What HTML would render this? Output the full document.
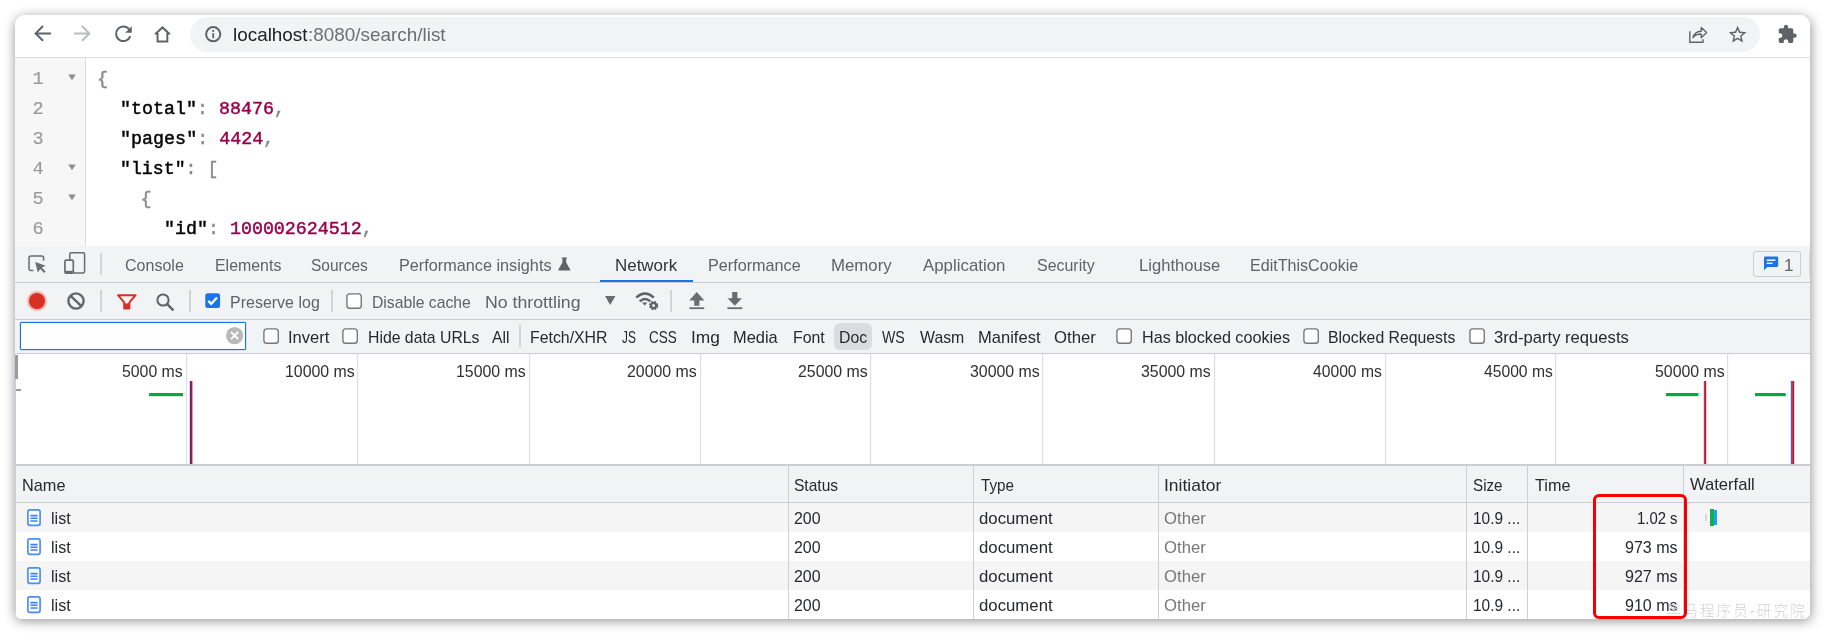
<!DOCTYPE html>
<html lang="en"><head><meta charset="utf-8"><title>Network panel</title>
<style>
html,body{margin:0;padding:0;background:#fff;}
body{width:1825px;height:636px;overflow:hidden;position:relative;}
#root{position:absolute;left:0;top:0;width:1825px;height:636px;overflow:hidden;}
#root{will-change:transform;}
.t{position:absolute;white-space:pre;line-height:40px;height:40px;transform-origin:0 0;}
.a{position:absolute;}
#card{position:absolute;left:15px;top:15px;width:1795px;height:604px;border-radius:10px 10px 7px 7px;background:#fff;
  box-shadow:0.4px 2px 12px rgba(0,0,0,0.42);overflow:hidden;}
#card .a{position:absolute;}
svg{position:absolute;overflow:visible;}
#clip{position:absolute;left:15px;top:15px;width:1795px;height:604px;border-radius:10px 10px 7px 7px;overflow:hidden;}
#in{position:absolute;left:-15px;top:-15px;width:1825px;height:636px;}

</style></head>
<body>
<div id="root">
<div id="card"></div>
<div id="clip"><div id="in">
<div class="a" style="left:15px;top:15px;width:1795px;height:42px;background:#fff;"></div>
<div class="a" style="left:190px;top:17px;width:1570px;height:35px;background:#f1f3f4;border-radius:17.5px;"></div>
<div class="a" style="left:15px;top:57px;width:1795px;height:1px;background:#dadce0;"></div>
<div class="a" style="left:15px;top:58px;width:70px;height:188px;background:#f7f7f7;"></div>
<div class="a" style="left:85px;top:58px;width:1px;height:188px;background:#dddddd;"></div>
<div class="a" style="left:15px;top:246px;width:1795px;height:373px;background:#f1f3f4;"></div>
<div class="a" style="left:15px;top:282px;width:1795px;height:1px;background:#cbcdd1;"></div>
<div class="a" style="left:15px;top:319px;width:1795px;height:1px;background:#cbcdd1;"></div>
<div class="a" style="left:15px;top:353px;width:1795px;height:1px;background:#cbcdd1;"></div>
<div class="a" style="left:599.5px;top:280.4px;width:93px;height:2px;background:#1a73e8;"></div>
<svg style="left:98.9px;top:253.2px;" width="4" height="21.600000000000023" viewBox="0 0 4 21.600000000000023"><rect x="1.2" y="0" width="1.6" height="21.600000000000023" fill="#c9cbd0"/></svg>
<svg style="left:98.9px;top:289.5px;" width="4" height="22.0" viewBox="0 0 4 22.0"><rect x="1.2" y="0" width="1.6" height="22.0" fill="#c9cbd0"/></svg>
<svg style="left:188.4px;top:289.5px;" width="4" height="22.0" viewBox="0 0 4 22.0"><rect x="1.2" y="0" width="1.6" height="22.0" fill="#c9cbd0"/></svg>
<svg style="left:329.8px;top:289.5px;" width="4" height="22.0" viewBox="0 0 4 22.0"><rect x="1.2" y="0" width="1.6" height="22.0" fill="#c9cbd0"/></svg>
<svg style="left:669px;top:289.5px;" width="4" height="22.0" viewBox="0 0 4 22.0"><rect x="1.2" y="0" width="1.6" height="22.0" fill="#c9cbd0"/></svg>
<svg style="left:518px;top:325px;" width="4" height="22" viewBox="0 0 4 22"><rect x="1.2" y="0" width="1.6" height="22" fill="#c9cbd0"/></svg>
<div class="a" style="left:19.6px;top:322.4px;width:226.8px;height:27.8px;background:#fff;box-sizing:border-box;border:1.3px solid #1a73e8;border-radius:1px;box-shadow:0 0 0 0.5px rgba(26,115,232,0.30);"></div>
<div class="a" style="left:834.4px;top:323.2px;width:37.4px;height:27.2px;background:#dadce0;border-radius:6px;"></div>
<div class="a" style="left:15px;top:354px;width:1795px;height:111px;background:#fff;"></div>
<svg style="left:184.0px;top:354px;" width="5" height="110" viewBox="0 0 5 110"><rect x="1.95" y="0" width="1.25" height="110" fill="#dfdfdf"/></svg>
<svg style="left:355.25px;top:354px;" width="5" height="110" viewBox="0 0 5 110"><rect x="1.95" y="0" width="1.25" height="110" fill="#dfdfdf"/></svg>
<svg style="left:526.5px;top:354px;" width="5" height="110" viewBox="0 0 5 110"><rect x="1.95" y="0" width="1.25" height="110" fill="#dfdfdf"/></svg>
<svg style="left:697.75px;top:354px;" width="5" height="110" viewBox="0 0 5 110"><rect x="1.95" y="0" width="1.25" height="110" fill="#dfdfdf"/></svg>
<svg style="left:868.2px;top:354px;" width="5" height="110" viewBox="0 0 5 110"><rect x="1.95" y="0" width="1.25" height="110" fill="#dfdfdf"/></svg>
<svg style="left:1040.25px;top:354px;" width="5" height="110" viewBox="0 0 5 110"><rect x="1.95" y="0" width="1.25" height="110" fill="#dfdfdf"/></svg>
<svg style="left:1211.5px;top:354px;" width="5" height="110" viewBox="0 0 5 110"><rect x="1.95" y="0" width="1.25" height="110" fill="#dfdfdf"/></svg>
<svg style="left:1382.75px;top:354px;" width="5" height="110" viewBox="0 0 5 110"><rect x="1.95" y="0" width="1.25" height="110" fill="#dfdfdf"/></svg>
<svg style="left:1553.0px;top:354px;" width="5" height="110" viewBox="0 0 5 110"><rect x="1.95" y="0" width="1.25" height="110" fill="#dfdfdf"/></svg>
<svg style="left:1725.0px;top:354px;" width="5" height="110" viewBox="0 0 5 110"><rect x="1.95" y="0" width="1.25" height="110" fill="#dfdfdf"/></svg>
<div class="a" style="left:15px;top:464px;width:1795px;height:2px;background:#cbcdd1;"></div>
<div class="a" style="left:15.4px;top:354.5px;width:2.8px;height:24px;background:#9a9a9a;"></div>
<div class="a" style="left:15.3px;top:378.5px;width:1px;height:86px;background:#c4cfe2;"></div>
<div class="a" style="left:16px;top:388.8px;width:5.4px;height:2px;background:#9a9a9a;"></div>
<svg style="left:149.2px;top:392.6px;" width="34.1" height="3.2" viewBox="0 0 34.1 3.2"><rect x="0" y="0" width="34.1" height="3.2" fill="#05a847"/></svg>
<div class="a" style="left:184px;top:392px;width:1px;height:4px;background:#d8ecf8;"></div>
<svg style="left:1666.1px;top:392.6px;" width="32.5" height="3.2" viewBox="0 0 32.5 3.2"><rect x="0" y="0" width="32.5" height="3.2" fill="#05a847"/></svg>
<div class="a" style="left:1699px;top:392px;width:1px;height:4px;background:#d8ecf8;"></div>
<svg style="left:1755.2px;top:392.6px;" width="30.8" height="3.2" viewBox="0 0 30.8 3.2"><rect x="0" y="0" width="30.8" height="3.2" fill="#05a847"/></svg>
<div class="a" style="left:1787px;top:392px;width:1px;height:4px;background:#d8ecf8;"></div>
<div class="a" style="left:189px;top:381px;width:1px;height:83px;background:#dcdcf6;"></div>
<div class="a" style="left:190px;top:381px;width:1px;height:83px;background:#2a2ab8;"></div>
<div class="a" style="left:191px;top:381px;width:1px;height:83px;background:#c81414;"></div>
<div class="a" style="left:192px;top:381px;width:1px;height:83px;background:#ee9c9c;"></div>
<div class="a" style="left:1703px;top:381px;width:1px;height:83px;background:#f6dce2;"></div>
<div class="a" style="left:1704px;top:381px;width:1px;height:83px;background:#b23a60;"></div>
<div class="a" style="left:1705px;top:381px;width:1px;height:83px;background:#cc1418;"></div>
<div class="a" style="left:1706px;top:381px;width:1px;height:83px;background:#f8d0d0;"></div>
<div class="a" style="left:1790px;top:381px;width:1px;height:83px;background:#dcdcf6;"></div>
<div class="a" style="left:1791px;top:381px;width:1px;height:83px;background:#5c5cc0;"></div>
<div class="a" style="left:1792px;top:381px;width:1px;height:83px;background:#a84464;"></div>
<div class="a" style="left:1793px;top:381px;width:1px;height:83px;background:#c81010;"></div>
<div class="a" style="left:1794px;top:381px;width:1px;height:83px;background:#f8d0d0;"></div>
<div class="a" style="left:15px;top:466.5px;width:1795px;height:36px;background:#f1f3f4;"></div>
<div class="a" style="left:15px;top:502.3px;width:1795px;height:1px;background:#cbcdd1;"></div>
<div class="a" style="left:15px;top:503.3px;width:1795px;height:29px;background:#f5f5f5;"></div>
<div class="a" style="left:15px;top:532.3px;width:1795px;height:29px;background:#fff;"></div>
<div class="a" style="left:15px;top:561.3px;width:1795px;height:29px;background:#f5f5f5;"></div>
<div class="a" style="left:15px;top:590.3px;width:1795px;height:29px;background:#fff;"></div>
<div class="a" style="left:788.2px;top:466px;width:1px;height:153.5px;background:#cdcfd3;"></div>
<div class="a" style="left:973.3px;top:466px;width:1px;height:153.5px;background:#cdcfd3;"></div>
<div class="a" style="left:1158px;top:466px;width:1px;height:153.5px;background:#cdcfd3;"></div>
<div class="a" style="left:1466.2px;top:466px;width:1px;height:153.5px;background:#cdcfd3;"></div>
<div class="a" style="left:1527.2px;top:466px;width:1px;height:153.5px;background:#cdcfd3;"></div>
<div class="a" style="left:1683.3px;top:466px;width:1px;height:153.5px;background:#cdcfd3;"></div>
<div class="a" style="left:1704.8px;top:514px;width:2.4px;height:7px;background:#d9dadc;"></div>
<div class="a" style="left:1710px;top:508.7px;width:4.2px;height:17.7px;background:#0fae4e;"></div>
<div class="a" style="left:1714.2px;top:510px;width:2.8px;height:15px;background:#1e9eff;"></div>
<svg style="left:204.9px;top:293.0px" width="15.4" height="15.4" viewBox="0 0 16 16"><rect x="0.3" y="0.3" width="15.4" height="15.4" rx="2.6" fill="#1a73e8"/><path d="M3.4 8.2l3.1 3.1 6-6.6" fill="none" stroke="#fff" stroke-width="2.4"/></svg>
<svg style="left:346.20000000000005px;top:292.7px" width="16.2" height="16.2" viewBox="0 0 16 16"><rect x="0.9" y="0.9" width="14.2" height="14.2" rx="2.8" fill="#fff" stroke="#767676" stroke-width="1.35"/></svg>
<svg style="left:262.6px;top:328.3px" width="16.2" height="16.2" viewBox="0 0 16 16"><rect x="0.9" y="0.9" width="14.2" height="14.2" rx="2.8" fill="#fff" stroke="#767676" stroke-width="1.35"/></svg>
<svg style="left:342.40000000000003px;top:328.3px" width="16.2" height="16.2" viewBox="0 0 16 16"><rect x="0.9" y="0.9" width="14.2" height="14.2" rx="2.8" fill="#fff" stroke="#767676" stroke-width="1.35"/></svg>
<svg style="left:1116.1px;top:328.3px" width="16.2" height="16.2" viewBox="0 0 16 16"><rect x="0.9" y="0.9" width="14.2" height="14.2" rx="2.8" fill="#fff" stroke="#767676" stroke-width="1.35"/></svg>
<svg style="left:1303.1px;top:328.3px" width="16.2" height="16.2" viewBox="0 0 16 16"><rect x="0.9" y="0.9" width="14.2" height="14.2" rx="2.8" fill="#fff" stroke="#767676" stroke-width="1.35"/></svg>
<svg style="left:1468.6px;top:328.3px" width="16.2" height="16.2" viewBox="0 0 16 16"><rect x="0.9" y="0.9" width="14.2" height="14.2" rx="2.8" fill="#fff" stroke="#767676" stroke-width="1.35"/></svg>
<svg style="left:33.9px;top:25.4px;" width="17" height="16.8" viewBox="0 0 16.2 16"><path d="M8.6 1 L1.6 8 L8.6 15" fill="none" stroke="#5f6368" stroke-width="1.9" /><path d="M1.8 8 H16.2" fill="none" stroke="#5f6368" stroke-width="1.9" /></svg>
<svg style="left:74.4px;top:25.4px;" width="17" height="16.8" viewBox="0 0 16.2 16"><path d="M7.6 1 L14.6 8 L7.6 15" fill="none" stroke="#b9bcc0" stroke-width="1.9" /><path d="M14.4 8 H0" fill="none" stroke="#b9bcc0" stroke-width="1.9" /></svg>
<svg style="left:113.6px;top:25.3px;" width="18.4" height="17" viewBox="0 0 17.6 16.2"><path d="M14.6 4.2 A7 7 0 1 0 15.6 10.6" fill="none" stroke="#5f6368" stroke-width="1.9"/><path d="M17 1.2 V7.4 H10.8 Z" fill="#5f6368"/></svg>
<svg style="left:154.2px;top:25.8px;" width="16.9" height="16.6" viewBox="0 0 16.2 16"><path d="M1 8 L8.1 1.4 L15.2 8 M3.4 6.8 V15 H12.8 V6.8" fill="none" stroke="#5f6368" stroke-width="1.9" stroke-linejoin="miter"/></svg>
<svg style="left:204.5px;top:26.2px;" width="16.4" height="16.4" viewBox="0 0 16.4 16.4"><circle cx="8.2" cy="8.2" r="7.1" fill="none" stroke="#5f6368" stroke-width="2"/><rect x="7.3" y="7.2" width="1.8" height="5" fill="#5f6368"/><rect x="7.3" y="4" width="1.8" height="1.9" fill="#5f6368"/></svg>
<svg style="left:1688.7px;top:26.2px;" width="18.6" height="17" viewBox="0 0 18.6 17"><path d="M0.8 5.2 V16.2 H14 V13.2" fill="none" stroke="#5f6368" stroke-width="1.4"/><path d="M4 11.6 C5 7.6 8 5.4 12.2 5.2 V1.4 L17.6 6.6 L12.2 11.8 V8 C8.6 8 6 9 4 11.6 Z" fill="none" stroke="#5f6368" stroke-width="1.4" stroke-linejoin="round"/></svg>
<svg style="left:1726.8px;top:24.1px;" width="21.2" height="21.2" viewBox="0 0 24 24"><path d="M22 9.24l-7.19-.62L12 2 9.19 8.63 2 9.24l5.46 4.73L5.82 21 12 17.27 18.18 21l-1.63-7.03L22 9.24zM12 15.4l-3.76 2.27 1-4.28-3.32-2.88 4.38-.38L12 6.1l1.71 4.04 4.38.38-3.32 2.88 1 4.28L12 15.4z" fill="#5f6368"/></svg>
<svg style="left:1777.2px;top:23.9px;" width="20.6" height="20.6" viewBox="0 0 24 24"><path d="M20.5 11H19V7c0-1.1-.9-2-2-2h-4V3.5C13 2.12 11.88 1 10.5 1S8 2.12 8 3.5V5H4c-1.1 0-1.99.9-1.99 2v3.8H3.5c1.49 0 2.7 1.21 2.7 2.7s-1.21 2.7-2.7 2.7H2V20c0 1.1.9 2 2 2h3.8v-1.5c0-1.49 1.21-2.7 2.7-2.7 1.49 0 2.7 1.21 2.7 2.7V22H17c1.1 0 2-.9 2-2v-4h1.5c1.38 0 2.5-1.12 2.5-2.5S21.88 11 20.5 11z" fill="#5f6368"/></svg>
<svg style="left:68px;top:74.2px;" width="8" height="6.6" viewBox="0 0 8 6.6"><path d="M0.3 0.5 H7.7 L4 6.3 Z" fill="#8c8c8c"/></svg>
<svg style="left:68px;top:164.2px;" width="8" height="6.6" viewBox="0 0 8 6.6"><path d="M0.3 0.5 H7.7 L4 6.3 Z" fill="#8c8c8c"/></svg>
<svg style="left:68px;top:194.2px;" width="8" height="6.6" viewBox="0 0 8 6.6"><path d="M0.3 0.5 H7.7 L4 6.3 Z" fill="#8c8c8c"/></svg>
<svg style="left:28.3px;top:255px;" width="18.4" height="18.4" viewBox="0 0 18.4 18.4"><path d="M5.4 15.6 H3 Q1 15.6 1 13.6 V3 Q1 1 3 1 H13.6 Q15.6 1 15.6 3 V5.8" fill="none" stroke="#6a6c70" stroke-width="1.5"/><path d="M7.2 7 L17.8 10.8 L13.8 12.4 L17.6 16.6 L16.2 18 L12.2 14 L9.8 17.6 Z" fill="#6a6c70"/></svg>
<svg style="left:63.8px;top:252.2px;" width="21.6" height="22" viewBox="0 0 21.6 22"><path d="M5.8 8 V2.2 Q5.8 0.8 7.2 0.8 H19.2 Q20.6 0.8 20.6 2.2 V19.6 Q20.6 21 19.2 21 H9.6" fill="none" stroke="#6a6c70" stroke-width="1.5"/><rect x="0.9" y="8.2" width="8.4" height="12.9" rx="1.2" fill="#f1f3f4" stroke="#6a6c70" stroke-width="1.7"/><rect x="1.2" y="18.8" width="7.8" height="2.2" fill="#6a6c70"/></svg>
<svg style="left:558.3px;top:257px;" width="12.6" height="14" viewBox="0 0 12.6 14"><path d="M3.6 0.4 H9 V1.6 H8.2 V5.4 L12.2 12.4 Q12.6 13.6 11.4 13.6 H1.2 Q0 13.6 0.4 12.4 L4.4 5.4 V1.6 H3.6 Z" fill="#5f6368"/></svg>
<svg style="left:27px;top:290.5px;" width="20" height="20" viewBox="0 0 20 20"><circle cx="10" cy="10" r="10.4" fill="#f2a9a4" opacity="0.5"/><circle cx="10" cy="10" r="9.2" fill="#f09a94" opacity="0.55"/><circle cx="10" cy="10" r="8" fill="#d93025"/></svg>
<svg style="left:67px;top:291.5px;" width="18" height="18" viewBox="0 0 18 18"><circle cx="9" cy="9" r="7.6" fill="none" stroke="#63666a" stroke-width="2.4"/><path d="M3.6 3.8 L14.4 14.2" stroke="#63666a" stroke-width="2.4" fill="none"/></svg>
<svg style="left:116.5px;top:293.6px;" width="19.6" height="15.8" viewBox="0 0 19.6 15.8"><path d="M1 1.2 H18.6 L12.4 8.4 V14.6 H7.2 V8.4 Z" fill="none" stroke="#d93025" stroke-width="2" stroke-linejoin="round"/><path d="M7.4 9.4 H12.2 V14.4 H7.4 Z" fill="#d93025"/></svg>
<svg style="left:155.6px;top:292.6px;" width="18.6" height="18.6" viewBox="0 0 18.6 18.6"><circle cx="7" cy="7" r="5.6" fill="none" stroke="#5f6368" stroke-width="2"/><path d="M11.2 11.2 L17.4 17.4" stroke="#5f6368" stroke-width="2.4" fill="none"/></svg>
<svg style="left:605.1px;top:296.4px;" width="10.4" height="9" viewBox="0 0 10.4 9"><path d="M0 0 H10.4 L5.2 9 Z" fill="#6a6c70"/></svg>
<svg style="left:635.2px;top:291.6px;" width="23.6" height="18.6" viewBox="0 0 23.6 18.6"><path d="M1.2 5.6 Q10 -2.4 18.8 5.6" fill="none" stroke="#5f6368" stroke-width="2.4"/><path d="M4.6 9.4 Q10 4.6 15.4 9.4" fill="none" stroke="#5f6368" stroke-width="2.4"/><path d="M7 10.6 H12.4 L9.7 13.6 Z" fill="#5f6368"/><circle cx="18.6" cy="13.6" r="3.6" fill="none" stroke="#5f6368" stroke-width="2" stroke-dasharray="1.9 0.93"/><circle cx="18.6" cy="13.6" r="2.5" fill="none" stroke="#5f6368" stroke-width="2"/></svg>
<svg style="left:688.6px;top:292px;" width="15.6" height="17.4" viewBox="0 0 15.6 17.4"><path d="M7.8 0 L15.4 8.4 H10.4 V13.8 H5.2 V8.4 H0.2 Z" fill="#6a6c70"/><rect x="0.4" y="15.3" width="14.8" height="1.8" fill="#6a6c70"/></svg>
<svg style="left:727.2px;top:292px;" width="15.6" height="17.4" viewBox="0 0 15.6 17.4"><path d="M5.2 0 H10.4 V6.2 H15 L7.8 13.8 L0.6 6.2 H5.2 Z" fill="#6a6c70"/><rect x="0.4" y="15.3" width="14.8" height="1.8" fill="#6a6c70"/></svg>
<svg style="left:226.4px;top:326.6px;" width="17.2" height="17.2" viewBox="0 0 17.2 17.2"><circle cx="8.6" cy="8.6" r="8.6" fill="#b9b9b9"/><path d="M5 5 L12.2 12.2 M12.2 5 L5 12.2" stroke="#fff" stroke-width="1.8" fill="none"/></svg>
<div class="a" style="left:1753.2px;top:251.2px;width:47.8px;height:25.6px;background:#f1f3f4;box-sizing:border-box;border:1px solid #cbcdd1;border-radius:3px;"></div>
<svg style="left:1764px;top:256.4px;" width="14.2" height="14.8" viewBox="0 0 15.6 15"><path d="M1.6 0 H14 Q15.6 0 15.6 1.6 V9.8 Q15.6 11.4 14 11.4 H3.6 L0 15 V1.6 Q0 0 1.6 0 Z" fill="#1a73e8"/><rect x="3" y="3.2" width="9.6" height="1.6" fill="#fff"/><rect x="3" y="6.6" width="6.4" height="1.6" fill="#fff"/></svg>
<div class="a" style="left:1808.8px;top:253.4px;width:1.2px;height:21.2px;background:#d8dadd;"></div>
<svg style="left:26.8px;top:509px;" width="14.4" height="17.2" viewBox="0 0 14.4 17.2"><rect x="0.9" y="0.9" width="12.2" height="15.4" rx="2" fill="#fff" stroke="#4b8df8" stroke-width="1.7"/><path d="M3.4 6.6 H10.6 M3.4 9.3 H10.6 M3.4 12 H10.6" stroke="#3b82f6" stroke-width="1.6" fill="none"/></svg>
<svg style="left:26.8px;top:538px;" width="14.4" height="17.2" viewBox="0 0 14.4 17.2"><rect x="0.9" y="0.9" width="12.2" height="15.4" rx="2" fill="#fff" stroke="#4b8df8" stroke-width="1.7"/><path d="M3.4 6.6 H10.6 M3.4 9.3 H10.6 M3.4 12 H10.6" stroke="#3b82f6" stroke-width="1.6" fill="none"/></svg>
<svg style="left:26.8px;top:567px;" width="14.4" height="17.2" viewBox="0 0 14.4 17.2"><rect x="0.9" y="0.9" width="12.2" height="15.4" rx="2" fill="#fff" stroke="#4b8df8" stroke-width="1.7"/><path d="M3.4 6.6 H10.6 M3.4 9.3 H10.6 M3.4 12 H10.6" stroke="#3b82f6" stroke-width="1.6" fill="none"/></svg>
<svg style="left:26.8px;top:596px;" width="14.4" height="17.2" viewBox="0 0 14.4 17.2"><rect x="0.9" y="0.9" width="12.2" height="15.4" rx="2" fill="#fff" stroke="#4b8df8" stroke-width="1.7"/><path d="M3.4 6.6 H10.6 M3.4 9.3 H10.6 M3.4 12 H10.6" stroke="#3b82f6" stroke-width="1.6" fill="none"/></svg>
<div class="a" style="left:15px;top:464px;width:1px;height:155px;background:#cfcfcf;"></div>
</div></div>

<span class="t" style="left:233.47px;top:15.00px;font-size:18.4px;font-family:'Liberation Sans',sans-serif;transform:scaleX(1.0268);color:#202124;font-weight:400;">localhost</span>
<span class="t" style="left:307.75px;top:15.00px;font-size:18.4px;font-family:'Liberation Sans',sans-serif;transform:scaleX(1.0273);color:#6b6f74;font-weight:400;">:8080/search/list</span>
<span class="t" style="left:32.60px;top:60.00px;font-size:18.6px;font-family:'Liberation Mono',monospace;transform:scaleX(1.0000);color:#999;font-weight:400;-webkit-text-stroke-width:0.15px;">1</span>
<span class="t" style="left:32.60px;top:90.00px;font-size:18.6px;font-family:'Liberation Mono',monospace;transform:scaleX(1.0000);color:#999;font-weight:400;-webkit-text-stroke-width:0.15px;">2</span>
<span class="t" style="left:32.60px;top:120.00px;font-size:18.6px;font-family:'Liberation Mono',monospace;transform:scaleX(1.0000);color:#999;font-weight:400;-webkit-text-stroke-width:0.15px;">3</span>
<span class="t" style="left:32.60px;top:150.00px;font-size:18.6px;font-family:'Liberation Mono',monospace;transform:scaleX(1.0000);color:#999;font-weight:400;-webkit-text-stroke-width:0.15px;">4</span>
<span class="t" style="left:32.60px;top:180.00px;font-size:18.6px;font-family:'Liberation Mono',monospace;transform:scaleX(1.0000);color:#999;font-weight:400;-webkit-text-stroke-width:0.15px;">5</span>
<span class="t" style="left:32.60px;top:210.00px;font-size:18.6px;font-family:'Liberation Mono',monospace;transform:scaleX(1.0000);color:#999;font-weight:400;-webkit-text-stroke-width:0.15px;">6</span>
<span class="t" style="left:97.00px;top:59.90px;font-size:18.6px;font-family:'Liberation Mono',monospace;transform:scaleX(1.0000);color:#8a8a8a;font-weight:400;-webkit-text-stroke-width:0.45px;">{</span>
<span class="t" style="left:120.03px;top:89.90px;font-size:18.6px;font-family:'Liberation Mono',monospace;transform:scaleX(0.9850);color:#000;font-weight:400;-webkit-text-stroke-width:0.45px;"><span style="color:#000">&quot;total&quot;</span><span style="color:#8a8a8a">: </span><span style="color:#99004d">88476</span><span style="color:#8a8a8a">,</span></span>
<span class="t" style="left:120.02px;top:119.90px;font-size:18.6px;font-family:'Liberation Mono',monospace;transform:scaleX(0.9879);color:#000;font-weight:400;-webkit-text-stroke-width:0.45px;"><span style="color:#000">&quot;pages&quot;</span><span style="color:#8a8a8a">: </span><span style="color:#99004d">4424</span><span style="color:#8a8a8a">,</span></span>
<span class="t" style="left:120.04px;top:149.90px;font-size:18.6px;font-family:'Liberation Mono',monospace;transform:scaleX(0.9792);color:#000;font-weight:400;-webkit-text-stroke-width:0.45px;"><span style="color:#000">&quot;list&quot;</span><span style="color:#8a8a8a">: [</span></span>
<span class="t" style="left:140.60px;top:179.90px;font-size:18.6px;font-family:'Liberation Mono',monospace;transform:scaleX(1.0000);color:#8a8a8a;font-weight:400;-webkit-text-stroke-width:0.45px;">{</span>
<span class="t" style="left:164.03px;top:209.90px;font-size:18.6px;font-family:'Liberation Mono',monospace;transform:scaleX(0.9844);color:#000;font-weight:400;-webkit-text-stroke-width:0.45px;"><span style="color:#000">&quot;id&quot;</span><span style="color:#8a8a8a">: </span><span style="color:#99004d">100002624512</span><span style="color:#8a8a8a">,</span></span>
<span class="t" style="left:124.96px;top:246.20px;font-size:17px;font-family:'Liberation Sans',sans-serif;transform:scaleX(0.9426);color:#5f6368;font-weight:400;">Console</span>
<span class="t" style="left:214.66px;top:246.20px;font-size:17px;font-family:'Liberation Sans',sans-serif;transform:scaleX(0.9362);color:#5f6368;font-weight:400;">Elements</span>
<span class="t" style="left:310.69px;top:246.20px;font-size:17px;font-family:'Liberation Sans',sans-serif;transform:scaleX(0.9115);color:#5f6368;font-weight:400;">Sources</span>
<span class="t" style="left:399.04px;top:246.20px;font-size:17px;font-family:'Liberation Sans',sans-serif;transform:scaleX(0.9551);color:#5f6368;font-weight:400;">Performance insights</span>
<span class="t" style="left:708.15px;top:246.20px;font-size:17px;font-family:'Liberation Sans',sans-serif;transform:scaleX(0.9526);color:#5f6368;font-weight:400;">Performance</span>
<span class="t" style="left:830.61px;top:246.20px;font-size:17px;font-family:'Liberation Sans',sans-serif;transform:scaleX(0.9883);color:#5f6368;font-weight:400;">Memory</span>
<span class="t" style="left:923.40px;top:246.20px;font-size:17px;font-family:'Liberation Sans',sans-serif;transform:scaleX(0.9915);color:#5f6368;font-weight:400;">Application</span>
<span class="t" style="left:1036.96px;top:246.20px;font-size:17px;font-family:'Liberation Sans',sans-serif;transform:scaleX(0.9383);color:#5f6368;font-weight:400;">Security</span>
<span class="t" style="left:1138.62px;top:246.20px;font-size:17px;font-family:'Liberation Sans',sans-serif;transform:scaleX(0.9765);color:#5f6368;font-weight:400;">Lighthouse</span>
<span class="t" style="left:1249.95px;top:246.20px;font-size:17px;font-family:'Liberation Sans',sans-serif;transform:scaleX(0.9464);color:#5f6368;font-weight:400;">EditThisCookie</span>
<span class="t" style="left:614.80px;top:246.20px;font-size:17px;font-family:'Liberation Sans',sans-serif;transform:scaleX(0.9967);color:#333;font-weight:400;">Network</span>
<span class="t" style="left:1784.10px;top:246.20px;font-size:17px;font-family:'Liberation Sans',sans-serif;transform:scaleX(1.0000);color:#5f6368;font-weight:400;">1</span>
<span class="t" style="left:229.86px;top:283.00px;font-size:17px;font-family:'Liberation Sans',sans-serif;transform:scaleX(0.9409);color:#5f6368;font-weight:400;">Preserve log</span>
<span class="t" style="left:371.97px;top:283.00px;font-size:17px;font-family:'Liberation Sans',sans-serif;transform:scaleX(0.9257);color:#5f6368;font-weight:400;">Disable cache</span>
<span class="t" style="left:485.46px;top:283.00px;font-size:17px;font-family:'Liberation Sans',sans-serif;transform:scaleX(1.0422);color:#5f6368;font-weight:400;">No throttling</span>
<span class="t" style="left:287.53px;top:318.00px;font-size:17px;font-family:'Liberation Sans',sans-serif;transform:scaleX(0.9732);color:#27292d;font-weight:400;">Invert</span>
<span class="t" style="left:367.67px;top:318.00px;font-size:17px;font-family:'Liberation Sans',sans-serif;transform:scaleX(0.9288);color:#27292d;font-weight:400;">Hide data URLs</span>
<span class="t" style="left:492.30px;top:318.00px;font-size:17px;font-family:'Liberation Sans',sans-serif;transform:scaleX(0.9222);color:#27292d;font-weight:400;">All</span>
<span class="t" style="left:530.37px;top:318.00px;font-size:17px;font-family:'Liberation Sans',sans-serif;transform:scaleX(0.9321);color:#27292d;font-weight:400;">Fetch/XHR</span>
<span class="t" style="left:621.80px;top:318.00px;font-size:17px;font-family:'Liberation Sans',sans-serif;transform:scaleX(0.6947);color:#27292d;font-weight:400;">JS</span>
<span class="t" style="left:649.31px;top:318.00px;font-size:17px;font-family:'Liberation Sans',sans-serif;transform:scaleX(0.7939);color:#27292d;font-weight:400;">CSS</span>
<span class="t" style="left:690.88px;top:318.00px;font-size:17px;font-family:'Liberation Sans',sans-serif;transform:scaleX(1.0192);color:#27292d;font-weight:400;">Img</span>
<span class="t" style="left:733.34px;top:318.00px;font-size:17px;font-family:'Liberation Sans',sans-serif;transform:scaleX(0.9644);color:#27292d;font-weight:400;">Media</span>
<span class="t" style="left:792.57px;top:318.00px;font-size:17px;font-family:'Liberation Sans',sans-serif;transform:scaleX(0.9333);color:#27292d;font-weight:400;">Font</span>
<span class="t" style="left:839.07px;top:318.00px;font-size:17px;font-family:'Liberation Sans',sans-serif;transform:scaleX(0.9310);color:#27292d;font-weight:400;">Doc</span>
<span class="t" style="left:882.40px;top:318.00px;font-size:17px;font-family:'Liberation Sans',sans-serif;transform:scaleX(0.8333);color:#27292d;font-weight:400;">WS</span>
<span class="t" style="left:920.20px;top:318.00px;font-size:17px;font-family:'Liberation Sans',sans-serif;transform:scaleX(0.9326);color:#27292d;font-weight:400;">Wasm</span>
<span class="t" style="left:977.63px;top:318.00px;font-size:17px;font-family:'Liberation Sans',sans-serif;transform:scaleX(0.9730);color:#27292d;font-weight:400;">Manifest</span>
<span class="t" style="left:1054.01px;top:318.00px;font-size:17px;font-family:'Liberation Sans',sans-serif;transform:scaleX(0.9854);color:#27292d;font-weight:400;">Other</span>
<span class="t" style="left:1141.65px;top:318.00px;font-size:17px;font-family:'Liberation Sans',sans-serif;transform:scaleX(0.9500);color:#27292d;font-weight:400;">Has blocked cookies</span>
<span class="t" style="left:1328.37px;top:318.00px;font-size:17px;font-family:'Liberation Sans',sans-serif;transform:scaleX(0.9289);color:#27292d;font-weight:400;">Blocked Requests</span>
<span class="t" style="left:1494.02px;top:318.00px;font-size:17px;font-family:'Liberation Sans',sans-serif;transform:scaleX(0.9772);color:#27292d;font-weight:400;">3rd-party requests</span>
<span class="t" style="left:122.27px;top:352.00px;font-size:17px;font-family:'Liberation Sans',sans-serif;transform:scaleX(0.9312);color:#303030;font-weight:400;">5000 ms</span>
<span class="t" style="left:284.92px;top:352.00px;font-size:17px;font-family:'Liberation Sans',sans-serif;transform:scaleX(0.9342);color:#303030;font-weight:400;">10000 ms</span>
<span class="t" style="left:456.17px;top:352.00px;font-size:17px;font-family:'Liberation Sans',sans-serif;transform:scaleX(0.9342);color:#303030;font-weight:400;">15000 ms</span>
<span class="t" style="left:627.42px;top:352.00px;font-size:17px;font-family:'Liberation Sans',sans-serif;transform:scaleX(0.9342);color:#303030;font-weight:400;">20000 ms</span>
<span class="t" style="left:797.87px;top:352.00px;font-size:17px;font-family:'Liberation Sans',sans-serif;transform:scaleX(0.9342);color:#303030;font-weight:400;">25000 ms</span>
<span class="t" style="left:969.92px;top:352.00px;font-size:17px;font-family:'Liberation Sans',sans-serif;transform:scaleX(0.9342);color:#303030;font-weight:400;">30000 ms</span>
<span class="t" style="left:1141.17px;top:352.00px;font-size:17px;font-family:'Liberation Sans',sans-serif;transform:scaleX(0.9342);color:#303030;font-weight:400;">35000 ms</span>
<span class="t" style="left:1313.35px;top:352.00px;font-size:17px;font-family:'Liberation Sans',sans-serif;transform:scaleX(0.9216);color:#303030;font-weight:400;">40000 ms</span>
<span class="t" style="left:1483.60px;top:352.00px;font-size:17px;font-family:'Liberation Sans',sans-serif;transform:scaleX(0.9216);color:#303030;font-weight:400;">45000 ms</span>
<span class="t" style="left:1654.67px;top:352.00px;font-size:17px;font-family:'Liberation Sans',sans-serif;transform:scaleX(0.9342);color:#303030;font-weight:400;">50000 ms</span>
<span class="t" style="left:21.74px;top:466.40px;font-size:17px;font-family:'Liberation Sans',sans-serif;transform:scaleX(0.9591);color:#27292d;font-weight:400;">Name</span>
<span class="t" style="left:794.29px;top:466.40px;font-size:17px;font-family:'Liberation Sans',sans-serif;transform:scaleX(0.9149);color:#27292d;font-weight:400;">Status</span>
<span class="t" style="left:980.50px;top:466.40px;font-size:17px;font-family:'Liberation Sans',sans-serif;transform:scaleX(0.8944);color:#27292d;font-weight:400;">Type</span>
<span class="t" style="left:1163.97px;top:466.40px;font-size:17px;font-family:'Liberation Sans',sans-serif;transform:scaleX(1.0278);color:#27292d;font-weight:400;">Initiator</span>
<span class="t" style="left:1472.71px;top:466.40px;font-size:17px;font-family:'Liberation Sans',sans-serif;transform:scaleX(0.8935);color:#27292d;font-weight:400;">Size</span>
<span class="t" style="left:1534.80px;top:466.40px;font-size:17px;font-family:'Liberation Sans',sans-serif;transform:scaleX(0.9528);color:#27292d;font-weight:400;">Time</span>
<span class="t" style="left:1690.30px;top:465.40px;font-size:17px;font-family:'Liberation Sans',sans-serif;transform:scaleX(0.9754);color:#27292d;font-weight:400;">Waterfall</span>
<span class="t" style="left:50.85px;top:499.30px;font-size:17px;font-family:'Liberation Sans',sans-serif;transform:scaleX(0.9500);color:#27292d;font-weight:400;">list</span>
<span class="t" style="left:794.26px;top:499.30px;font-size:17px;font-family:'Liberation Sans',sans-serif;transform:scaleX(0.9370);color:#27292d;font-weight:400;">200</span>
<span class="t" style="left:979.11px;top:499.30px;font-size:17px;font-family:'Liberation Sans',sans-serif;transform:scaleX(0.9865);color:#27292d;font-weight:400;">document</span>
<span class="t" style="left:1164.02px;top:499.30px;font-size:17px;font-family:'Liberation Sans',sans-serif;transform:scaleX(0.9829);color:#777;font-weight:400;">Other</span>
<span class="t" style="left:1472.69px;top:499.30px;font-size:17px;font-family:'Liberation Sans',sans-serif;transform:scaleX(0.9082);color:#27292d;font-weight:400;">10.9 ...</span>
<span class="t" style="left:1637.02px;top:499.30px;font-size:17px;font-family:'Liberation Sans',sans-serif;transform:scaleX(0.8756);color:#27292d;font-weight:400;">1.02 s</span>
<span class="t" style="left:50.85px;top:528.30px;font-size:17px;font-family:'Liberation Sans',sans-serif;transform:scaleX(0.9500);color:#27292d;font-weight:400;">list</span>
<span class="t" style="left:794.26px;top:528.30px;font-size:17px;font-family:'Liberation Sans',sans-serif;transform:scaleX(0.9370);color:#27292d;font-weight:400;">200</span>
<span class="t" style="left:979.11px;top:528.30px;font-size:17px;font-family:'Liberation Sans',sans-serif;transform:scaleX(0.9865);color:#27292d;font-weight:400;">document</span>
<span class="t" style="left:1164.02px;top:528.30px;font-size:17px;font-family:'Liberation Sans',sans-serif;transform:scaleX(0.9829);color:#777;font-weight:400;">Other</span>
<span class="t" style="left:1472.69px;top:528.30px;font-size:17px;font-family:'Liberation Sans',sans-serif;transform:scaleX(0.9082);color:#27292d;font-weight:400;">10.9 ...</span>
<span class="t" style="left:1625.36px;top:528.30px;font-size:17px;font-family:'Liberation Sans',sans-serif;transform:scaleX(0.9444);color:#27292d;font-weight:400;">973 ms</span>
<span class="t" style="left:50.85px;top:557.30px;font-size:17px;font-family:'Liberation Sans',sans-serif;transform:scaleX(0.9500);color:#27292d;font-weight:400;">list</span>
<span class="t" style="left:794.26px;top:557.30px;font-size:17px;font-family:'Liberation Sans',sans-serif;transform:scaleX(0.9370);color:#27292d;font-weight:400;">200</span>
<span class="t" style="left:979.11px;top:557.30px;font-size:17px;font-family:'Liberation Sans',sans-serif;transform:scaleX(0.9865);color:#27292d;font-weight:400;">document</span>
<span class="t" style="left:1164.02px;top:557.30px;font-size:17px;font-family:'Liberation Sans',sans-serif;transform:scaleX(0.9829);color:#777;font-weight:400;">Other</span>
<span class="t" style="left:1472.69px;top:557.30px;font-size:17px;font-family:'Liberation Sans',sans-serif;transform:scaleX(0.9082);color:#27292d;font-weight:400;">10.9 ...</span>
<span class="t" style="left:1625.36px;top:557.30px;font-size:17px;font-family:'Liberation Sans',sans-serif;transform:scaleX(0.9444);color:#27292d;font-weight:400;">927 ms</span>
<span class="t" style="left:50.85px;top:586.30px;font-size:17px;font-family:'Liberation Sans',sans-serif;transform:scaleX(0.9500);color:#27292d;font-weight:400;">list</span>
<span class="t" style="left:794.26px;top:586.30px;font-size:17px;font-family:'Liberation Sans',sans-serif;transform:scaleX(0.9370);color:#27292d;font-weight:400;">200</span>
<span class="t" style="left:979.11px;top:586.30px;font-size:17px;font-family:'Liberation Sans',sans-serif;transform:scaleX(0.9865);color:#27292d;font-weight:400;">document</span>
<span class="t" style="left:1164.02px;top:586.30px;font-size:17px;font-family:'Liberation Sans',sans-serif;transform:scaleX(0.9829);color:#777;font-weight:400;">Other</span>
<span class="t" style="left:1472.69px;top:586.30px;font-size:17px;font-family:'Liberation Sans',sans-serif;transform:scaleX(0.9082);color:#27292d;font-weight:400;">10.9 ...</span>
<span class="t" style="left:1625.36px;top:586.30px;font-size:17px;font-family:'Liberation Sans',sans-serif;transform:scaleX(0.9444);color:#27292d;font-weight:400;">910 ms</span>
<span class="t" style="left:1666.50px;top:591.20px;font-size:14.6px;font-family:'Liberation Sans','Noto Sans CJK SC',sans-serif;transform:scaleX(1.0000);color:#d2d2d2;font-weight:300;letter-spacing:2.088px;">黑马程序员-研究院</span>

<div class="a" style="left:1592.9px;top:494.4px;width:94.2px;height:125px;box-sizing:border-box;border:3.4px solid #f40000;border-radius:6px;"></div>
</div>
</body></html>
